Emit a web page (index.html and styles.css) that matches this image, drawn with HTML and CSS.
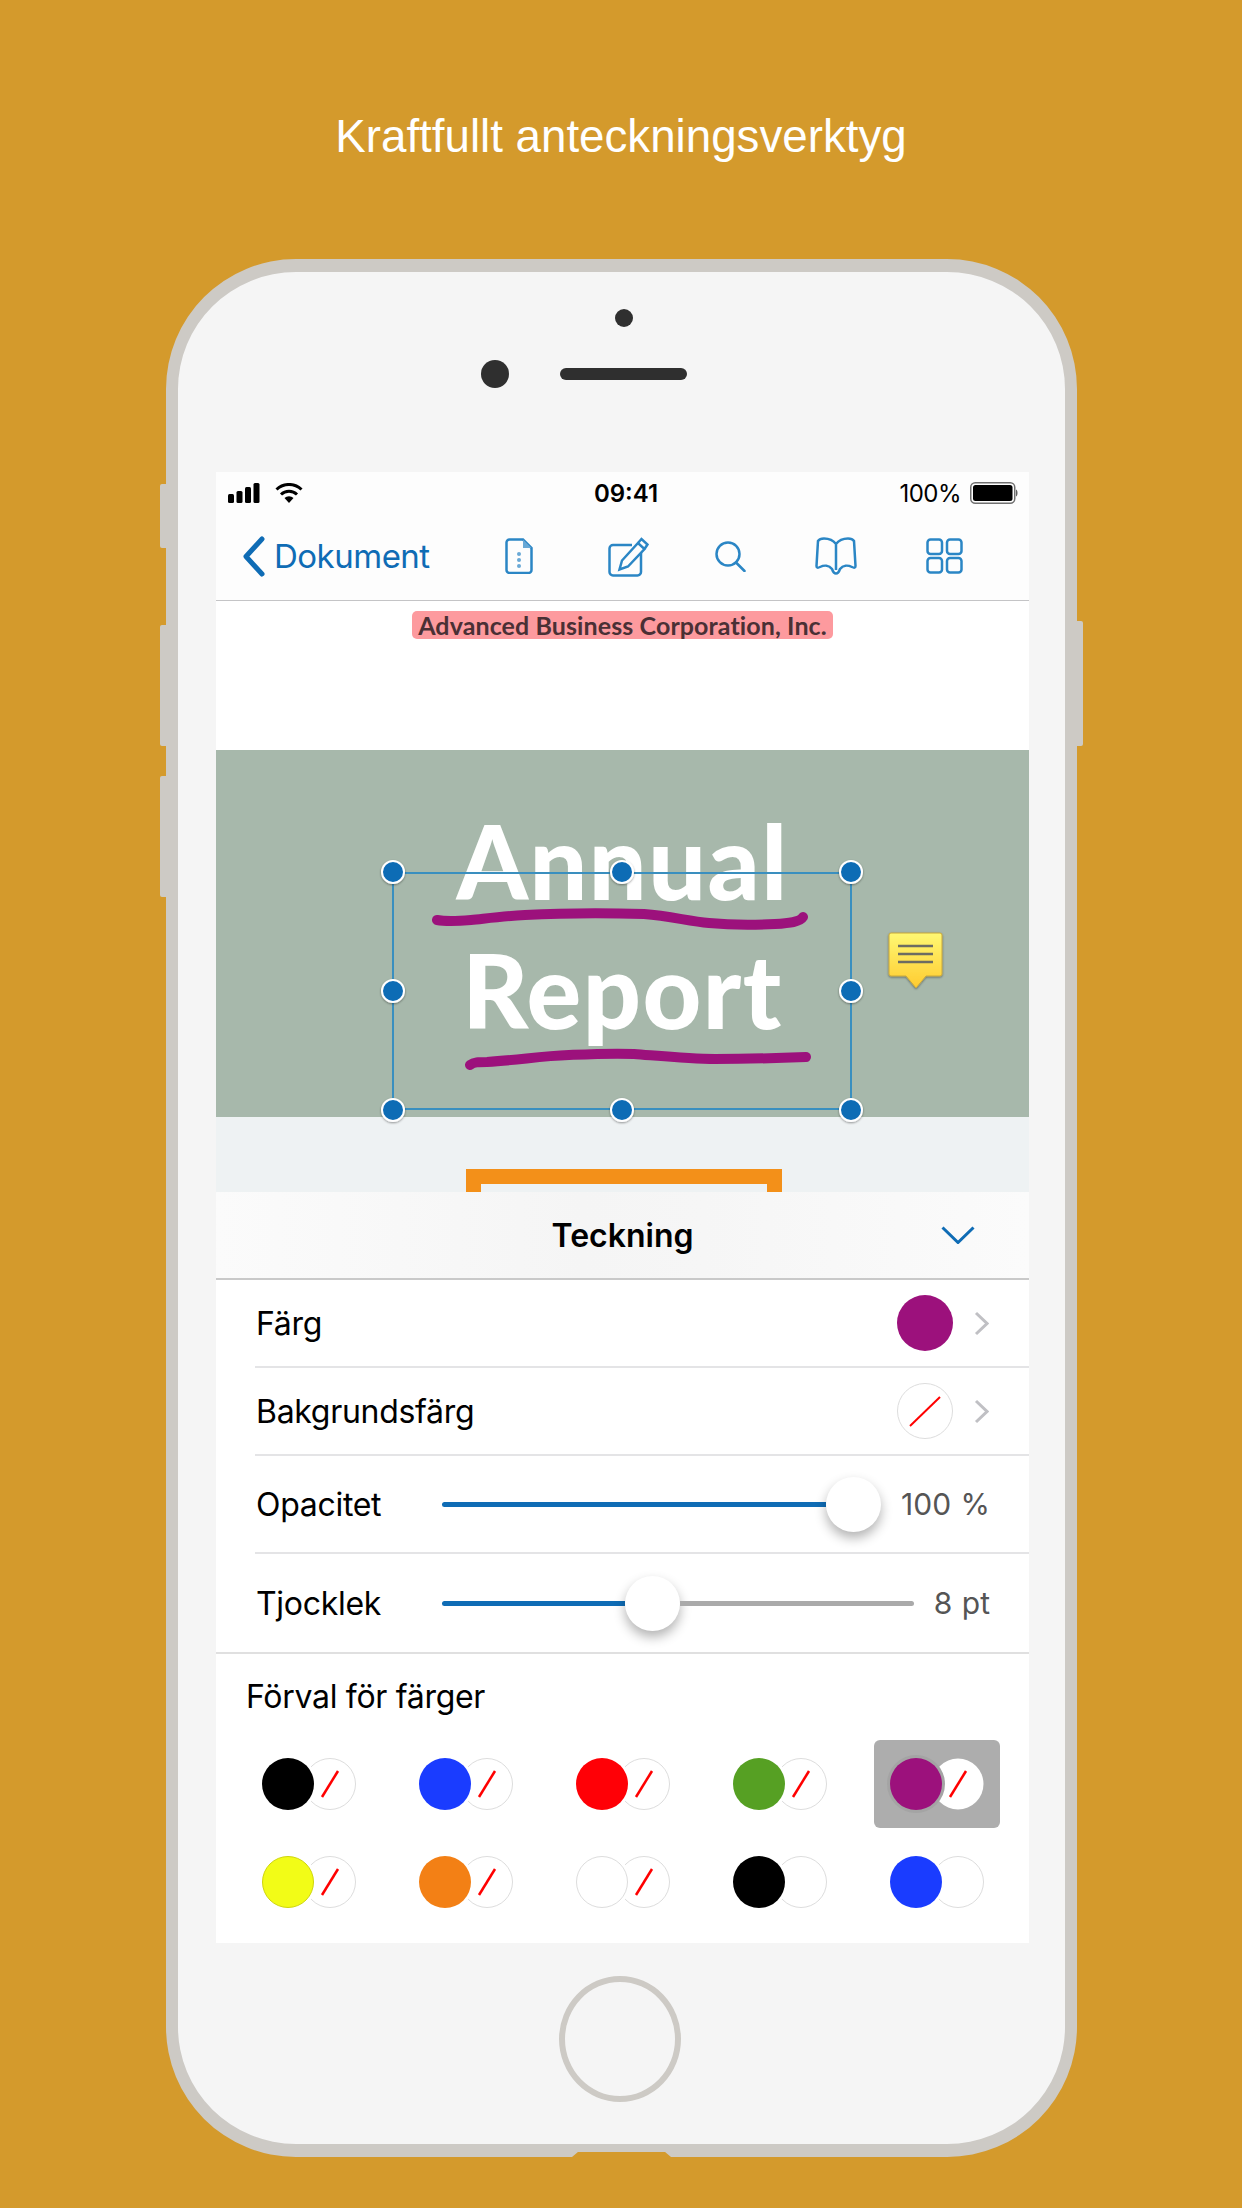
FILE: index.html
```html
<!DOCTYPE html>
<html lang="sv">
<head>
    <meta charset="UTF-8">
    <title>Kraftfullt anteckningsverktyg</title>
    <link rel="stylesheet" href="styles.css">
</head>
<body>
    <h1 class="headline">Kraftfullt anteckningsverktyg</h1>

    <div class="phone">
        <div class="side-btn btn-mute"></div>
        <div class="side-btn btn-up"></div>
        <div class="side-btn btn-down"></div>
        <div class="side-btn btn-power"></div>
        <div class="notch"></div>

        <div class="sensors">
            <div class="sensor-dot"></div>
            <div class="sensor-row">
                <div class="camera"></div>
                <div class="speaker"></div>
            </div>
        </div>

        <div class="screen">
            <div class="statusbar">
                <div class="status-left">
                    <svg width="32" height="20" viewBox="0 0 32 20"><rect x="0" y="11" width="6" height="9" rx="1.5"/><rect x="8.5" y="8" width="6" height="12" rx="1.5"/><rect x="17" y="4" width="6" height="16" rx="1.5"/><rect x="25.5" y="0" width="6" height="20" rx="1.5"/></svg>
                    <svg width="28" height="20" viewBox="0 0 28 20"><path d="M1.5 6.5A18 18 0 0 1 26.5 6.5M6 11.5A11.5 11.5 0 0 1 22 11.5" fill="none" stroke="#000" stroke-width="3"/><path d="M9.5 15L14 20L18.500 15A6.500 6.500 0 0 0 9.500 15Z"/></svg>
                </div>
                <div class="status-time">09:41</div>
                <div class="status-right">
                    <span>100%</span>
                    <svg width="48" height="22" viewBox="0 0 48 22"><rect x="0.750" y="0.750" width="44" height="20.500" rx="4.500" fill="none" stroke="#707070" stroke-width="1.500"/><rect x="3" y="3" width="39.500" height="16" rx="2.500"/><path d="M46 7.500C48 8 48 14 46 14.500Z" fill="#606060"/></svg>
                </div>
            </div>

            <div class="navbar">
                <svg class="nav-back" width="23" height="41" viewBox="0 0 23 41"><path d="M20 3L4 20.500L20 38" fill="none" stroke="#0f6cb5" stroke-width="5" stroke-linecap="round" stroke-linejoin="round"/></svg>
                <span class="nav-title">Dokument</span>
                <div class="nav-icons">
                    <svg width="28" height="36" viewBox="0 0 28 36"><path d="M4.500 1.500H18L26.500 10V32A3 3 0 0 1 23.500 35H4.500A3 3 0 0 1 1.500 32V4.500A3 3 0 0 1 4.500 1.500Z"/><path class="ic-fill" d="M18 1.500L26.500 10H18Z"/><circle class="ic-fill" cx="14" cy="16" r="2"/><circle class="ic-fill" cx="14" cy="22" r="2"/><circle class="ic-fill" cx="14" cy="28" r="2"/></svg>
                    <svg class="ic-edit" width="41" height="41" viewBox="0 0 41 41"><path d="M24 9H5A3.500 3.500 0 0 0 1.500 12.500V36A3.500 3.500 0 0 0 5 39.500H29.500A3.500 3.500 0 0 0 33 36V17"/><path d="M11.500 33.500L14 24.500L30 7L36.500 13L20 30.500Z M30 7L33.500 3L39.500 8.500L36.500 13"/></svg>
                    <svg class="ic-search" width="31" height="31" viewBox="0 0 31 31"><circle cx="13" cy="13" r="11.500"/><path d="M21 21.500L29.500 30" stroke-linecap="round"/></svg>
                    <svg width="42" height="38" viewBox="0 0 42 38"><path d="M21 7C18 3 13 1.500 9 1.500C6 1.500 4 2.500 3 4L1.500 29C1.500 31 3 31 5 30C9 28 14 28 17 32C18 35 19.500 36.500 21 36.500C22.500 36.500 24 35 25 32C28 28 33 28 37 30C39 31 40.500 31 40.500 29L39 4C38 2.500 36 1.500 33 1.500C29 1.500 24 3 21 7V33"/></svg>
                    <svg width="37" height="36" viewBox="0 0 37 36"><rect x="1.500" y="1.500" width="14.500" height="14.500" rx="3"/><rect x="21" y="1.500" width="14.500" height="14.500" rx="3"/><rect x="1.500" y="20" width="14.500" height="14.500" rx="3"/><rect x="21" y="20" width="14.500" height="14.500" rx="3"/></svg>
                </div>
            </div>

            <div class="doc">
                <div class="doc-head"><span class="company">Advanced Business Corporation, Inc.</span></div>
                <div class="cover">
                    <div class="cover-line">Annual</div>
                    <div class="cover-line">Report</div>
                </div>
                <div class="doc-below"><div class="frame"></div></div>

                <svg class="markup" width="813" height="591" viewBox="216 601 813 591">
                    <defs>
                        <linearGradient id="noteFill" x1="0" y1="0" x2="0" y2="1">
                            <stop offset="0" stop-color="#fff873"/>
                            <stop offset="1" stop-color="#ffcb30"/>
                        </linearGradient>
                        <filter id="soft" x="-30%" y="-30%" width="160%" height="160%">
                            <feDropShadow dx="0" dy="1" stdDeviation="1.200" flood-color="#000" flood-opacity="0.400"/>
                        </filter>
                    </defs>
                    <path class="ink" d="M437 920C447 922 460 921 471 920C490 918 505 916 525 915C565 913 605 913 644 914C670 916 688 921 709 923C730 925 755 925 775 924C790 923 800 922 803 917"/>
                    <path class="ink" d="M470 1065C474 1062 478 1062 487 1062C520 1060 540 1056 569 1055C592 1054 612 1053 634 1054C660 1056 690 1059 715 1059C745 1059 780 1058 806 1057"/>
                    <rect class="sel-box" x="393" y="873" width="458" height="236"/>
                    <g class="handles">
                        <circle cx="393" cy="872" r="11"/><circle cx="622" cy="872" r="11"/><circle cx="851" cy="872" r="11"/>
                        <circle cx="393" cy="991" r="11"/><circle cx="851" cy="991" r="11"/>
                        <circle cx="393" cy="1110" r="11"/><circle cx="622" cy="1110" r="11"/><circle cx="851" cy="1110" r="11"/>
                    </g>
                    <path d="M891 933H940Q942 933 942 935V974Q942 976 940 976H926L916 988L906 976H891Q889 976 889 974V935Q889 933 891 933Z" fill="url(#noteFill)" stroke="#c8a83c" filter="url(#soft)"/>
                    <path d="M898 946H933M898 954H933M898 962H933" stroke="#6d6c62" stroke-width="2.500"/>
                </svg>
            </div>

            <div class="panel">
                <div class="panel-head">
                    <span></span>
                    <span class="panel-title">Teckning</span>
                    <svg class="panel-close" width="34" height="18" viewBox="0 0 34 18"><path d="M1.500 1.500L17 16.500L32.500 1.500" fill="none" stroke="#0f6cb5" stroke-width="3"/></svg>
                </div>

                <div class="row row-color">
                    <span class="row-label">Färg</span>
                    <div class="color-dot"></div>
                    <svg class="row-arrow" width="15" height="25" viewBox="0 0 15 25"><path d="M2 2L13 12.500L2 23" fill="none" stroke="#c0c0c4" stroke-width="3"/></svg>
                </div>
                <div class="row row-color">
                    <span class="row-label">Bakgrundsfärg</span>
                    <svg width="56" height="56" viewBox="0 0 56 56"><circle cx="28" cy="28" r="27.500" fill="#fff" stroke="#ddd"/><path d="M13 43L43 14" stroke="#f00" stroke-width="2"/></svg>
                    <svg class="row-arrow" width="15" height="25" viewBox="0 0 15 25"><path d="M2 2L13 12.500L2 23" fill="none" stroke="#c0c0c4" stroke-width="3"/></svg>
                </div>
                <div class="row row-slider">
                    <span class="row-label slider-label">Opacitet</span>
                    <div class="slider">
                        <div class="track-on track-grow"></div>
                        <div class="thumb"></div>
                    </div>
                    <span class="row-value">100 %</span>
                </div>
                <div class="row row-slider row-last">
                    <span class="row-label slider-label">Tjocklek</span>
                    <div class="slider">
                        <div class="track-on" style="width: 183px"></div>
                        <div class="thumb"></div>
                        <div class="track-off"></div>
                    </div>
                    <span class="row-value">8 pt</span>
                </div>

                <div class="presets">
                    <div class="presets-label">Förval för färger</div>
                    <div class="preset-grid">
                        <div class="swatch"><div class="fill c-black"></div><svg class="none" viewBox="0 0 52 52"><circle cx="26" cy="26" r="25.500"/><path d="M18 39L34 13"/></svg></div>
                        <div class="swatch"><div class="fill c-blue"></div><svg class="none" viewBox="0 0 52 52"><circle cx="26" cy="26" r="25.500"/><path d="M18 39L34 13"/></svg></div>
                        <div class="swatch"><div class="fill c-red"></div><svg class="none" viewBox="0 0 52 52"><circle cx="26" cy="26" r="25.500"/><path d="M18 39L34 13"/></svg></div>
                        <div class="swatch"><div class="fill c-green"></div><svg class="none" viewBox="0 0 52 52"><circle cx="26" cy="26" r="25.500"/><path d="M18 39L34 13"/></svg></div>
                        <div class="swatch swatch-on"><div class="fill c-purple"></div><svg class="none" viewBox="0 0 52 52"><circle cx="26" cy="26" r="25.500"/><path d="M18 39L34 13"/></svg></div>
                        <div class="swatch"><div class="fill c-yellow"></div><svg class="none" viewBox="0 0 52 52"><circle cx="26" cy="26" r="25.500"/><path d="M18 39L34 13"/></svg></div>
                        <div class="swatch"><div class="fill c-orange"></div><svg class="none" viewBox="0 0 52 52"><circle cx="26" cy="26" r="25.500"/><path d="M18 39L34 13"/></svg></div>
                        <div class="swatch"><div class="fill c-white"></div><svg class="none" viewBox="0 0 52 52"><circle cx="26" cy="26" r="25.500"/><path d="M18 39L34 13"/></svg></div>
                        <div class="swatch"><div class="fill c-black"></div><svg class="none" viewBox="0 0 52 52"><circle cx="26" cy="26" r="25.500"/></svg></div>
                        <div class="swatch"><div class="fill c-blue"></div><svg class="none" viewBox="0 0 52 52"><circle cx="26" cy="26" r="25.500"/></svg></div>
                    </div>
                </div>
            </div>
        </div>

        <div class="home-btn"></div>
    </div>
</body>
</html>
```

FILE: styles.css
```css
* {
    box-sizing: border-box;
}
body {
    margin: 0;
    height: 2208px;
    overflow: hidden;
    background-color: #d49a2c;
    font-family: Inter, "Liberation Sans", sans-serif;
    color: #000;
}
.headline {
    margin: 0;
    height: 259px;
    padding-top: 109px;
    text-align: center;
    font-family: "Liberation Sans", Arial, sans-serif;
    font-size: 45.7px;
    line-height: 56px;
    font-weight: 400;
    color: #fff;
}

/* phone body */
.phone {
    position: relative;
    width: 911px;
    height: 1898px;
    margin-left: 166px;
    background: #f5f5f5;
    border: solid #cdcac5;
    border-width: 13px 12px;
    border-radius: 130px;
}
.side-btn {
    position: absolute;
    width: 6px;
    left: -18px;
    background: #cdcac5;
    border-radius: 2px 0 0 2px;
}
.btn-mute { top: 212px; height: 64px; }
.btn-up { top: 353px; height: 121px; }
.btn-down { top: 504px; height: 121px; }
.btn-power {
    left: auto;
    right: -18px;
    top: 349px;
    height: 125px;
    border-radius: 0 2px 2px 0;
}
.notch {
    position: absolute;
    left: 394px;
    bottom: -13px;
    width: 99px;
    height: 5px;
    background: #d49a2c;
    clip-path: polygon(6% 0, 94% 0, 100% 100%, 0 100%);
}
.sensors {
    height: 200px;
    padding-top: 37px;
}
.sensor-dot {
    width: 18px;
    height: 18px;
    margin-left: 437px;
    background: #2f2f2f;
    border-radius: 50%;
}
.sensor-row {
    display: flex;
    align-items: center;
    gap: 51px;
    margin-top: 33px;
    padding-left: 303px;
}
.camera {
    width: 28px;
    height: 28px;
    background: #2f2f2f;
    border-radius: 50%;
}
.speaker {
    width: 127px;
    height: 12px;
    background: #2f2f2f;
    border-radius: 6px;
}
.home-btn {
    width: 122px;
    height: 126px;
    margin: 33px 0 0 381px;
    border: 6px solid #cdcac5;
    border-radius: 50%;
}

/* screen */
.screen {
    width: 813px;
    margin-left: 38px;
    background: #fff;
}
.statusbar {
    display: grid;
    grid-template-columns: 1fr auto 1fr;
    align-items: center;
    height: 42px;
    padding: 0 11px 0 12px;
    background: #fdfdfd;
    font-size: 24px;
}
.status-left {
    display: flex;
    gap: 15px;
}
.status-time {
    padding-left: 6px;
    font-weight: 600;
}
.status-right {
    display: flex;
    align-items: center;
    justify-content: flex-end;
    gap: 9px;
    letter-spacing: -0.5px;
}
.navbar {
    display: flex;
    align-items: center;
    height: 87px;
    padding: 0 66px 2px 26px;
    background: #fdfdfd;
    border-bottom: 1px solid #c4c4c6;
}
.nav-title {
    margin-left: 9px;
    font-size: 33px;
    letter-spacing: -0.5px;
    color: #0f6cb5;
}
.nav-icons {
    display: flex;
    align-items: center;
    gap: 69px;
    margin-left: auto;
}
.nav-icons svg {
    fill: none;
    stroke: #2b86c5;
    stroke-width: 2.500;
}
.nav-icons .ic-fill {
    fill: #6aa9d6;
    stroke: none;
}
.nav-icons .ic-edit { margin-left: 6px; }
.nav-icons .ic-search { margin-left: -3px; }

/* document behind the panel */
.doc {
    position: relative;
    height: 591px;
    overflow: hidden;
}
.doc-head {
    height: 149px;
    padding-top: 10px;
    text-align: center;
}
.company {
    display: inline-block;
    padding: 0 6px;
    height: 28px;
    line-height: 28px;
    background: #fd9a9e;
    border-radius: 5px;
    font-family: Lato, sans-serif;
    font-size: 25px;
    font-weight: 700;
    letter-spacing: 0.1px;
    color: #4a3035;
}
.cover {
    height: 367px;
    padding-top: 46px;
    background: #a7b8ab;
    text-align: center;
    font-family: Lato, sans-serif;
    font-size: 102px;
    letter-spacing: 1.500px;
    line-height: 129px;
    font-weight: 900;
    color: #fff;
}
.doc-below {
    height: 75px;
    padding: 52px 0 0 250px;
    background: #eef2f3;
}
.frame {
    width: 316px;
    height: 40px;
    border: 15px solid #f39019;
    background: #eef2f3;
}
.markup {
    position: absolute;
    left: 0;
    top: 0;
}
.ink {
    fill: none;
    stroke: #9c117c;
    stroke-width: 10;
    stroke-linecap: round;
}
.sel-box {
    fill: none;
    stroke: #3a8fbf;
    stroke-width: 2;
}
.handles circle {
    fill: #0f6cb5;
    stroke: #fff;
    stroke-width: 2;
    filter: url(#soft);
}

/* drawing panel */
.panel-head {
    display: grid;
    grid-template-columns: 1fr auto 1fr;
    align-items: center;
    height: 88px;
    background: linear-gradient(90deg, #fbfbfb, #f5f5f5 45%, #f6f6f6 60%, #fbfbfb);
    border-bottom: 2px solid #c9c9c9;
}
.panel-title {
    font-size: 32px;
    font-weight: 600;
}
.panel-close {
    justify-self: end;
    margin-right: 54px;
}
.row {
    display: flex;
    align-items: center;
    margin-left: 39px;
    padding: 0 40px 0 1px;
    border-bottom: 2px solid #e4e4e6;
    font-size: 32px;
}
.row-color {
    height: 88px;
}
.row-slider {
    height: 98px;
    padding-right: 39px;
}
.row-last {
    border-bottom: none;
}
.row-label {
    margin-right: auto;
    letter-spacing: -0.3px;
}
.color-dot {
    width: 56px;
    height: 56px;
    background: #9c117c;
    border-radius: 50%;
}
.row-arrow {
    margin-left: 21px;
}
.slider-label {
    width: 186px;
    margin-right: 0;
}
.slider {
    display: flex;
    align-items: center;
    flex: 1;
}
.track-on {
    height: 5px;
    background: #0f6cb5;
    border-radius: 3px 0 0 3px;
}
.track-grow {
    flex: 1;
}
.track-off {
    flex: 1;
    height: 5px;
    background: #aaa;
    border-radius: 0 3px 3px 0;
}
.thumb {
    width: 55px;
    height: 55px;
    background: #fff;
    border-radius: 50%;
    box-shadow: 0 6px 12px rgba(0, 0, 0, 0.3);
}
.row-value {
    margin-left: 20px;
    font-size: 30px;
    word-spacing: 1px;
    color: #555;
}

/* colour presets */
.presets {
    padding: 23px 30px 17px 28px;
    border-top: 2px solid #e0e0e0;
}
.presets-label {
    margin-left: 2px;
    height: 40px;
    line-height: 40px;
    font-size: 32px;
    letter-spacing: -0.3px;
}
.preset-grid {
    display: grid;
    grid-template-columns: repeat(5, 126px);
    grid-auto-rows: 88px;
    gap: 10px 31px;
    margin: 23px 0 0 2px;
}
.swatch {
    display: flex;
    align-items: center;
    padding-left: 16px;
    border-radius: 6px;
}
.swatch-on {
    background: #adadad;
}
.fill {
    position: relative;
    z-index: 1;
    flex: none;
    width: 52px;
    height: 52px;
    border-radius: 50%;
    box-shadow: 0 0 0 3px #fff;
}
.swatch-on .fill {
    box-shadow: 0 0 0 3px #a4a4a4;
}
.none {
    flex: none;
    width: 52px;
    height: 52px;
    margin-left: -10px;
}
.none circle {
    fill: #fff;
    stroke: #ddd;
}
.swatch-on .none circle {
    stroke: none;
}
.none path {
    stroke: #f00;
    stroke-width: 2.500;
}
.c-black { background: #000; }
.c-blue { background: #1a3cff; }
.c-red { background: #ff0006; }
.c-green { background: #56a023; }
.c-purple { background: #9c117c; }
.c-yellow { background: #f2fc17; border: 1px solid #cfd60c; }
.c-orange { background: #f38015; }
.c-white { background: #fff; border: 1px solid #ddd; }
```
